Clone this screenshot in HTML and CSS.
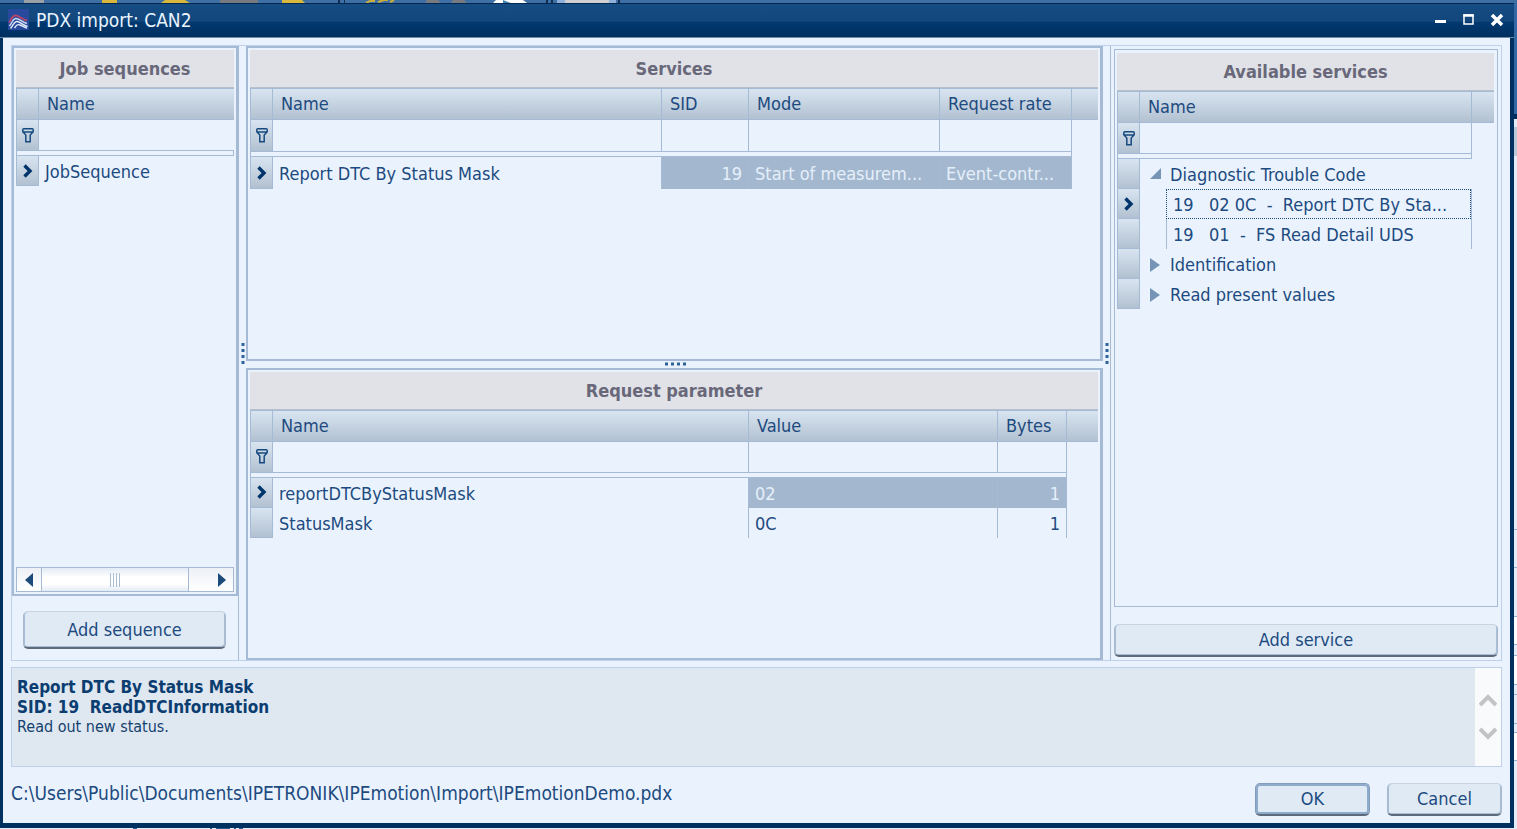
FILE: index.html
```html
<!DOCTYPE html>
<html lang="en">
<head>
<meta charset="utf-8">
<title>PDX import: CAN2</title>
<link rel="stylesheet" href="styles.css">
</head>
<body>
<svg class="symbols" aria-hidden="true">
  <symbol id="i-filter" viewBox="0 0 12 15"><path d="M1.800.800h8.400q1 0 1 1v2L8.200 7v6.700H3.800V7L.800 3.800v-2q0-1 1-1zM1 4h10" fill="none" stroke="#164a7f" stroke-width="1.500"/></symbol>
  <symbol id="i-current" viewBox="0 0 10 14"><path d="M1.500 1.500L7 7 1.500 12.500" fill="none" stroke="#00356b" stroke-width="3.400"/></symbol>
  <symbol id="i-open" viewBox="0 0 11 11"><path d="M11 0v11H0z" fill="#7594b6"/></symbol>
  <symbol id="i-closed" viewBox="0 0 10 14"><path d="M0 0l10 7-10 7z" fill="#7594b6"/></symbol>
</svg>

<svg class="backdrop-top" aria-hidden="true" width="1517" height="3">
  <path d="M24 0h20v3H24z" fill="#9aa0a5"/><path d="M102 0h15v3h-15z" fill="#d9b93c"/>
  <path d="M165 0h20l5 3h-29z" fill="#d9b93c"/><path d="M220 0h38v3h-38z" fill="#777b80"/>
  <path d="M282 0h20l3 3h-23z" fill="#d9b93c"/><path d="M338 0h2v3h-2zM344 0h1v3h-1zM546 0h2v3h-2zM551 0h2v3h-2zM618 0h2v3h-2z" fill="#102f52"/>
  <path d="M366 3l4-2h5M378 2l6-2h4M390 2l4-2" fill="none" stroke="#c9ad3a" stroke-width="2"/>
  <path d="M427 0h11l3 3h-16zM453 0h11l3 3h-16z" fill="#777b80"/><path d="M496 0h27l4 3h-34z" fill="#fff"/><path d="M503 0l8 3h-8z" fill="#3f86b5"/>
  <path d="M557 0h59v3h-59z" fill="#8fb0da"/><path d="M565 0h44v3h-44z" fill="#d0d0d2"/>
</svg>

<div class="stage">
<div class="dialog" role="dialog" aria-labelledby="dialog-title">
  <header class="titlebar">
    <svg class="logo" width="21" height="21" viewBox="0 0 21 21" aria-hidden="true">
      <path d="M0 0h21v21H0z" fill="#274a9d"/>
      <path d="M1 13.500C3 11 4 7 7 6.500c3-.500 7 4 12 5" fill="none" stroke="#b9456a" stroke-width="1.800"/>
      <path d="M1.500 17C4 14 4.500 10 7.500 9.500S14 13 19 14.500" fill="none" stroke="#c9d5f0" stroke-width="1.500"/>
      <path d="M2.500 19.500c2.500-2.500 3-6.500 6-7s6 3.500 11 5M6.500 19c2-3 3-4 5.500-3s4 2.500 7 3" fill="none" stroke="#e4ebf8" stroke-width="1.400"/>
    </svg>
    <h1 id="dialog-title">PDX import: CAN2</h1>
    <div class="window-buttons">
      <button type="button" aria-label="Minimize"><svg width="14" height="14"><path d="M1 7h11v3H1z" fill="#fff"/></svg></button>
      <button type="button" aria-label="Maximize"><svg width="14" height="14"><path d="M2 2h9v9H2z" fill="none" stroke="#fff" stroke-width="1.500"/><path d="M1.250 1.250h10.500v2.500H1.250z" fill="#fff"/></svg></button>
      <button type="button" aria-label="Close"><svg width="14" height="14"><path d="M2 2l10 10M12 2L2 12" stroke="#fff" stroke-width="3.500"/></svg></button>
    </div>
  </header>

  <main class="content">
    <div class="workspace">
      <section class="sequences" aria-labelledby="t-seq">
        <div class="panel">
          <h2 id="t-seq">Job sequences</h2>
          <table>
            <colgroup><col class="c-mark"><col></colgroup>
            <thead>
              <tr><th class="mark"></th><th>Name</th></tr>
              <tr class="filter"><td class="mark"><svg width="12" height="15"><use href="#i-filter"/></svg></td><td><input type="text" aria-label="Filter job sequences by name"></td></tr>
              <tr class="gap"><td colspan="2"></td></tr>
            </thead>
            <tbody>
              <tr><td class="mark"><svg width="10" height="14"><use href="#i-current"/></svg></td><td class="plain">JobSequence</td></tr>
            </tbody>
          </table>
          <div class="hscroll">
            <button type="button" aria-label="Scroll left"><svg width="8" height="14"><path d="M8 0v14L0 7z" fill="#1c4b7a"/></svg></button>
            <div class="thumb"><svg width="12" height="14"><path d="M1.500 0v14M4.500 0v14M7.500 0v14M10.500 0v14" stroke="#a9bcd2"/></svg></div>
            <button type="button" class="right" aria-label="Scroll right"><svg width="8" height="14"><path d="M0 0v14l8-7z" fill="#1c4b7a"/></svg></button>
          </div>
        </div>
        <button type="button" class="btn">Add sequence</button>
      </section>

      <div class="splitter"><svg width="4" height="22"><path d="M2 1v21" stroke="#2d629b" stroke-width="3" stroke-dasharray="3 3"/></svg></div>

      <div class="middle">
        <section class="panel services" aria-labelledby="t-serv">
          <h2 id="t-serv">Services</h2>
          <table>
            <colgroup><col class="c-mark"><col><col class="c-sid"><col class="c-mode"><col class="c-rate"><col class="c-rest"></colgroup>
            <thead>
              <tr><th class="mark"></th><th>Name</th><th>SID</th><th>Mode</th><th>Request rate</th><th></th></tr>
              <tr class="filter"><td class="mark"><svg width="12" height="15"><use href="#i-filter"/></svg></td><td><input type="text" aria-label="Filter services by name"></td><td><input type="text" aria-label="Filter by SID"></td><td><input type="text" aria-label="Filter by mode"></td><td><input type="text" aria-label="Filter by request rate"></td><td class="rest"></td></tr>
              <tr class="gap"><td colspan="5"></td><td class="rest"></td></tr>
            </thead>
            <tbody>
              <tr><td class="mark"><svg width="10" height="14"><use href="#i-current"/></svg></td><td>Report DTC By Status Mask</td><td class="sel num">19</td><td class="sel">Start of measurem...</td><td class="sel">Event-contr...</td><td class="rest"></td></tr>
            </tbody>
          </table>
        </section>
        <div class="splitter flat"><svg width="22" height="4"><path d="M1 2h21" stroke="#2d629b" stroke-width="3" stroke-dasharray="3 3"/></svg></div>
        <section class="panel params" aria-labelledby="t-par">
          <h2 id="t-par">Request parameter</h2>
          <table>
            <colgroup><col class="c-mark"><col><col class="c-value"><col class="c-bytes"><col class="c-end"></colgroup>
            <thead>
              <tr><th class="mark"></th><th>Name</th><th>Value</th><th>Bytes</th><th></th></tr>
              <tr class="filter"><td class="mark"><svg width="12" height="15"><use href="#i-filter"/></svg></td><td><input type="text" aria-label="Filter parameters by name"></td><td><input type="text" aria-label="Filter by value"></td><td><input type="text" aria-label="Filter by bytes"></td><td class="rest"></td></tr>
              <tr class="gap"><td colspan="4"></td><td class="rest"></td></tr>
            </thead>
            <tbody>
              <tr><td class="mark"><svg width="10" height="14"><use href="#i-current"/></svg></td><td>reportDTCByStatusMask</td><td class="sel">02</td><td class="sel num">1</td><td class="rest"></td></tr>
              <tr><td class="mark"></td><td>StatusMask</td><td>0C</td><td class="num">1</td><td class="rest"></td></tr>
            </tbody>
          </table>
        </section>
      </div>

      <div class="splitter"><svg width="4" height="22"><path d="M2 1v21" stroke="#2d629b" stroke-width="3" stroke-dasharray="3 3"/></svg></div>

      <section class="available" aria-labelledby="t-av">
        <div class="panel">
          <h2 id="t-av">Available services</h2>
          <table>
            <colgroup><col class="c-mark"><col><col class="c-tail"></colgroup>
            <thead>
              <tr><th class="mark"></th><th>Name</th><th></th></tr>
              <tr class="filter"><td class="mark"><svg width="12" height="15"><use href="#i-filter"/></svg></td><td><input type="text" aria-label="Filter available services by name"></td><td class="rest"></td></tr>
              <tr class="gap"><td colspan="2"></td><td class="rest"></td></tr>
            </thead>
            <tbody>
              <tr><td class="mark"></td><td class="group"><button type="button" aria-expanded="true"><svg width="11" height="14"><use href="#i-open" width="11" height="11"/></svg>Diagnostic Trouble Code</button></td><td class="rest"></td></tr>
              <tr><td class="mark"><svg width="10" height="14"><use href="#i-current"/></svg></td><td class="leaf"><div class="focused">19&nbsp;&nbsp; 02 0C&nbsp; -&nbsp; Report DTC By Sta...</div></td><td class="rest"></td></tr>
              <tr><td class="mark"></td><td class="leaf"><div>19&nbsp;&nbsp; 01&nbsp; -&nbsp; FS Read Detail UDS</div></td><td class="rest"></td></tr>
              <tr><td class="mark"></td><td class="group"><button type="button" aria-expanded="false"><svg width="11" height="14"><use href="#i-closed" width="10" height="14"/></svg>Identification</button></td><td class="rest"></td></tr>
              <tr><td class="mark"></td><td class="group"><button type="button" aria-expanded="false"><svg width="11" height="14"><use href="#i-closed" width="10" height="14"/></svg>Read present values</button></td><td class="rest"></td></tr>
            </tbody>
          </table>
        </div>
        <button type="button" class="btn">Add service</button>
      </section>
    </div>

    <div class="description">
      <div class="text"><strong>Report DTC By Status Mask</strong><strong>SID: 19&nbsp; ReadDTCInformation</strong><p>Read out new status.</p></div>
      <div class="vscroll">
        <button type="button" aria-label="Scroll up"><svg width="18" height="14"><path d="M1 12l8-8 8 8" fill="none" stroke="#c2c3c5" stroke-width="4"/></svg></button>
        <button type="button" aria-label="Scroll down"><svg width="18" height="14"><path d="M1 2l8 8 8-8" fill="none" stroke="#c2c3c5" stroke-width="4"/></svg></button>
      </div>
    </div>

    <footer>
      <span class="path">C:\Users\Public\Documents\IPETRONIK\IPEmotion\Import\IPEmotionDemo.pdx</span>
      <button type="button" class="btn default">OK</button>
      <button type="button" class="btn">Cancel</button>
    </footer>
  </main>
</div>
<svg class="backdrop-side" aria-hidden="true" width="3" height="825">
  <path d="M0 0h3v111H0z" fill="#3369a5"/><path d="M0 111h3v5H0z" fill="#002e5c"/><path d="M0 116h3v709H0z" fill="#e3ecf7"/>
  <path d="M0 124h3v29H0z" fill="#b9c9da"/><path d="M0 613h3v28H0zM0 653h3v28H0zM0 730h3v28H0z" fill="#fff"/>
  <path d="M0 526.500h3M0 564.500h3M0 613.500h3M0 641.500h3M0 652.500h3M0 681.500h3M0 691.500h3M0 720.500h3M0 729.500h3M0 757.500h3" stroke="#93b2d3"/>
</svg>
</div>
<svg class="backdrop-bottom" aria-hidden="true" width="1517" height="1"><path d="M133 0h4v1h-4zM210 0h2v1h-2zM216 0h14v1h-14zM234 0h2v1h-2zM239 0h4v1h-4z" fill="#24598c"/></svg>
</body>
</html>
```
FILE: styles.css
```css
:root {
  --ink: #1d4a7f;
  --paper: #eaf3fd;
  --line: #a5bbd5;
  --frame: #bfd1ea;
  --navy: #00305f;
}

* { box-sizing: border-box; }

body {
  margin: 0;
  min-height: 100vh;
  display: flex;
  flex-direction: column;
  background: #e6eff9;
  color: var(--ink);
  font: 18px/24px "DejaVu Sans Condensed", "DejaVu Sans", "Noto Sans", sans-serif;
}

button, input { font: inherit; color: inherit; }
button { padding: 0; border: 0; background: none; }
svg { display: block; flex: none; }

.symbols { position: absolute; width: 0; height: 0; }
.backdrop-top { background: #3f70a5; width: 100%; }
.backdrop-bottom { width: 100%; }
.stage { flex: 1; display: flex; }

.dialog {
  flex: 1;
  min-width: 0;
  display: flex;
  flex-direction: column;
  background: var(--navy);
  border-top: 1px solid #002750;
}

.titlebar {
  height: 34px;
  padding: 0 10px 2px 8px;
  display: flex;
  align-items: center;
  gap: 7px;
  background: linear-gradient(#154c83, #12477c 52%, #003970 56%, #002f60);
  border-bottom: 1px solid #6f8aa6;
  color: #e9f4ff;
}
.titlebar h1 { margin: 0; font-size: 19px; font-weight: normal; }
.window-buttons { margin-left: auto; display: flex; gap: 14px; }

.content {
  flex: 1;
  margin: 0 4px 5px 3px;
  padding: 7px 8px 7px 8px;
  display: flex;
  flex-direction: column;
  gap: 6px;
  background: var(--paper);
}

.workspace { flex: 1; display: flex; border: 1px solid var(--frame); }

.sequences { width: 227px; display: flex; flex-direction: column; border-right: 1px solid var(--line); }
.sequences .panel { flex: 1; border-width: 2px; }
.sequences .btn { margin: 15px 12px 11px 11px; height: 38px; }

.middle { flex: 1; min-width: 0; display: flex; flex-direction: column; }
.services { flex: 315; }
.params { flex: 292; }
.middle .panel { border-width: 2px 3px 2px 2px; }

.available {
  width: 391px;
  display: flex;
  flex-direction: column;
  padding: 3px;
  border-left: 1px solid var(--line);
}
.available .panel { flex: 1; }
.available .btn { height: 33px; margin-top: 17px; }

.panel {
  display: flex;
  flex-direction: column;
  padding: 2px;
  border: 2px solid var(--line);
}
.available .panel { border-width: 1px; padding: 3px 3px 3px 2px; }

.splitter { width: 7px; display: flex; align-items: center; justify-content: center; }
.splitter.flat { width: auto; height: 7px; }

h2 {
  margin: 0;
  padding: 7px 0 6px;
  background: #e1e2e7;
  border-bottom: 1px solid #b8c0cc;
  color: #68687a;
  font-size: 18px;
  line-height: 24px;
  text-align: center;
}

table { width: 100%; table-layout: fixed; border-collapse: separate; border-spacing: 0; }
.c-mark { width: 23px; }
.c-sid { width: 87px; }
.c-mode { width: 191px; }
.c-rate { width: 132px; }
.c-rest { width: 26px; }
.c-value { width: 249px; }
.c-bytes { width: 69px; }
.c-end { width: 31px; }
.c-tail { width: 22px; }

th, td { height: 30px; padding: 0 6px; border-right: 1px solid var(--line); text-align: left; white-space: nowrap; }
th {
  height: 32px;
  padding-left: 8px;
  background: linear-gradient(#d8e4f0, #b2c1d1);
  border-top: 1px solid var(--line);
  border-bottom: 1px solid var(--line);
  font-weight: normal;
}
th:last-child { border-right: 0; }
tbody td { padding-top: 2px; }
td.mark, th.mark {
  padding: 0;
  background: linear-gradient(#d8e4f0, #b2c1d1);
  border-left: 1px solid var(--line);
  border-bottom: 1px solid var(--line);
}
.mark svg { margin: 0 auto; }
.filter td { height: 31px; padding: 0; border-bottom: 1px solid var(--line); }
.filter input { display: block; width: 100%; height: 28px; padding: 0 6px; border: 0; background: transparent; }
.gap td { height: 5px; padding: 0; border-bottom: 1px solid var(--line); border-left: 1px solid var(--line); }
.sequences .filter td:last-child, .plain { border-right: 0; }
.services .filter td { height: 32px; }
.services tbody td { height: 32px; }
td.rest, .filter td.rest, .gap td.rest { border: 0; padding: 0; }
td.sel { background: #a3b8cf; color: #e5effa; }
td.num { text-align: right; }

.available .group { padding-left: 10px; border-right: 0; }
.group button { display: flex; align-items: center; gap: 9px; }
.available .leaf { padding: 0 0 0 26px; }
.leaf div { height: 30px; padding: 4px 0 2px 6px; border-left: 1px solid var(--line); }
.leaf .focused { padding-top: 3px; border: 1px dotted var(--ink); }

.hscroll { margin-top: auto; height: 25px; display: flex; border: 1px solid var(--line); background: linear-gradient(#edf1f6, #fff); }
.hscroll button { width: 24px; display: flex; align-items: center; justify-content: center; }
.hscroll button.right { width: 22px; margin-left: auto; }
.thumb {
  width: 148px;
  display: flex;
  align-items: center;
  justify-content: center;
  border: solid var(--line);
  border-width: 0 1px;
  background: linear-gradient(#e3ebf5, #fff 40%, #fff 70%, #e3ebf5);
}

.btn {
  background: #dfeaf5;
  border: 1px solid #a9b9cb;
  border-top-color: #c8d4e2;
  border-bottom: 2px solid #5c6a79;
  border-radius: 5px;
  box-shadow: inset 1px 0 #a9bfd8, inset -1px -1px #a9bfd8;
  text-align: center;
}
.btn.default { border-color: #829dbc #829dbc #5c6a79; box-shadow: inset 0 0 0 2px #8eabcb; }

.description { height: 100px; display: flex; border: 1px solid var(--frame); background: #dfe7f0; }
.text { flex: 1; padding: 9px 5px; color: #14426f; font-size: 17px; line-height: 20px; }
.text strong { display: block; color: #0b3d70; }
.text p { margin: 0; font-size: 16px; }
.vscroll { width: 26px; display: flex; flex-direction: column; align-items: center; justify-content: center; gap: 20px; background: #f9fafb; }

footer { padding-top: 10px; display: flex; align-items: center; gap: 17px; }
.path { flex: 1; align-self: flex-start; font-size: 19px; line-height: 20px; }
footer .btn { width: 115px; height: 33px; }
```
